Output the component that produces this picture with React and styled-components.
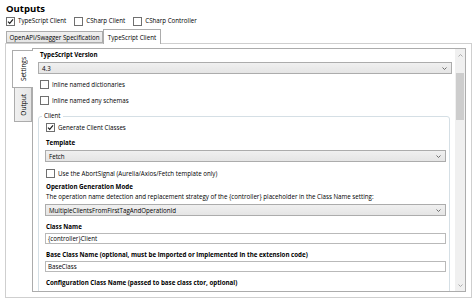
import React from "react";
import styled, { createGlobalStyle } from "styled-components";

const GlobalStyle = createGlobalStyle`
  html, body {
    margin: 0;
    padding: 0;
    background: #ffffff;
  }
  body {
    font-family: "Open Sans", "Noto Sans", sans-serif;
    color: #000000;
  }
`;

const FS = 6.2;

const Page = styled.div`
  width: 474px;
  height: 299px;
  box-sizing: border-box;
  padding: 3px 2px 1px 5px;
  display: flex;
  flex-direction: column;
  overflow: hidden;
`;

const Title = styled.div`
  font-size: 9.5px;
  font-weight: 700;
  line-height: 12px;
  height: 12px;
  margin-left: 1px;
`;

const CheckRow = styled.div`
  display: flex;
  align-items: center;
  gap: 8px;
  height: 10px;
  margin-top: 1px;
  margin-left: 1px;
`;

const CheckItem = styled.label`
  display: flex;
  align-items: center;
  gap: 3px;
  font-size: ${FS}px;
  line-height: 10px;
  height: ${(p) => p.$h || 10}px;
  white-space: nowrap;
`;

const Box = styled.span`
  width: 9px;
  height: 9px;
  box-sizing: border-box;
  border: 1px solid #707070;
  background: #ffffff;
  display: flex;
  align-items: center;
  justify-content: center;
  flex: none;
`;

const TabStrip = styled.div`
  display: flex;
  align-items: flex-end;
  height: 14px;
  margin-top: 3px;
  margin-left: 1px;
  position: relative;
  z-index: 1;
`;

const Tab = styled.div`
  box-sizing: border-box;
  height: ${(p) => (p.$active ? 15 : 12)}px;
  margin-bottom: ${(p) => (p.$active ? -1 : 0)}px;
  padding: 0 3px;
  display: flex;
  align-items: center;
  justify-content: center;
  font-size: ${FS}px;
  white-space: nowrap;
  border: 1px solid #acacac;
  border-bottom: ${(p) => (p.$active ? "none" : "1px solid #acacac")};
  border-left: ${(p) => (p.$first || p.$active ? "1px solid #acacac" : "none")};
  background: ${(p) =>
    p.$active ? "#ffffff" : "linear-gradient(#f0f0f0, #e5e5e5)"};
  width: ${(p) => p.$w}px;
`;

const Panel = styled.div`
  flex: 1;
  min-height: 0;
  box-sizing: border-box;
  border: 1px solid #cfcfcf;
  padding: 4px 5px 5px 6px;
  display: flex;
`;

const SideTabs = styled.div`
  width: 20px;
  display: flex;
  flex-direction: column;
  align-items: flex-end;
  padding-top: 2px;
  position: relative;
  z-index: 1;
`;

const SideTab = styled.div`
  box-sizing: border-box;
  width: ${(p) => (p.$active ? 21 : 18)}px;
  height: ${(p) => p.$h}px;
  margin-right: ${(p) => (p.$active ? -1 : 0)}px;
  border: 1px solid #acacac;
  border-right: ${(p) => (p.$active ? "none" : "1px solid #acacac")};
  border-top: ${(p) => (p.$active ? "1px solid #acacac" : "none")};
  background: ${(p) =>
    p.$active ? "#ffffff" : "linear-gradient(90deg, #f0f0f0, #e5e5e5)"};
  display: flex;
  align-items: center;
  justify-content: center;
`;

const SideLabel = styled.span`
  writing-mode: vertical-rl;
  transform: rotate(180deg);
  font-size: ${FS + 0.3}px;
  white-space: nowrap;
`;

const Inner = styled.div`
  flex: 1;
  min-width: 0;
  box-sizing: border-box;
  border: 1px solid #acacac;
  display: flex;
  overflow: hidden;
`;

const Content = styled.div`
  flex: 1;
  min-width: 0;
  padding: 1px 3px 0 5px;
  display: flex;
  flex-direction: column;
  overflow: hidden;
`;

const Label = styled.div`
  font-size: ${FS}px;
  font-weight: ${(p) => (p.$bold ? 700 : 400)};
  line-height: 10px;
  height: 10px;
  white-space: nowrap;
  margin-left: ${(p) => p.$indent ?? 1}px;
  margin-top: ${(p) => p.$mt || 0}px;
`;

const Select = styled.div`
  box-sizing: border-box;
  height: 12px;
  margin-top: ${(p) => p.$mt || 2}px;
  border: 1px solid #acacac;
  background: linear-gradient(#f0f0f0, #e5e5e5);
  display: flex;
  align-items: center;
  justify-content: space-between;
  padding: 0 4px 0 3px;
  font-size: ${FS}px;
  white-space: nowrap;
  flex: none;
`;

const Input = styled.div`
  box-sizing: border-box;
  height: 11px;
  margin-top: 1px;
  border: 1px solid #b9b9b9;
  background: #ffffff;
  display: flex;
  align-items: center;
  padding: 0 2px;
  font-size: ${FS}px;
  white-space: nowrap;
  flex: none;
`;

const Row = styled.div`
  margin-top: ${(p) => p.$mt || 0}px;
  margin-left: ${(p) => p.$indent ?? 2}px;
  flex: none;
`;

const Group = styled.fieldset`
  margin: 10px 2px 0 0;
  padding: 5px 3px 14px 6px;
  border: 1px solid #d5dfe5;
  border-radius: 3px;
  display: flex;
  flex-direction: column;
  flex: none;
  min-width: 0;
  position: relative;
`;

const Legend = styled.div`
  position: absolute;
  top: -6px;
  left: 3px;
  padding: 0 2px;
  background: #ffffff;
  font-size: ${FS}px;
  line-height: 10px;
`;

const ScrollBar = styled.div`
  width: 10px;
  background: #f0f0f0;
  display: flex;
  flex-direction: column;
  align-items: center;
  flex: none;
`;

const ScrollArrow = styled.div`
  height: 12px;
  display: flex;
  align-items: center;
  justify-content: center;
  flex: none;
`;

const Thumb = styled.div`
  width: 8px;
  height: 47px;
  margin-top: 12px;
  background: #cdcdcd;
  flex: none;
`;

const Spacer = styled.div`
  flex: 1;
`;

const Check = () => (
  <svg width="7" height="7" viewBox="0 0 7 7">
    <path d="M1 3.6 L2.7 5.3 L6 1.4" fill="none" stroke="#1e1e1e" strokeWidth="1.2" />
  </svg>
);

const Chevron = ({ up, color = "#606060" }) => (
  <svg width="5" height="3" viewBox="0 0 5 3">
    <path
      d={up ? "M0.5 2.5 L2.5 0.5 L4.5 2.5" : "M0.5 0.5 L2.5 2.5 L4.5 0.5"}
      fill="none"
      stroke={color}
      strokeWidth="0.9"
    />
  </svg>
);

const CheckBox = ({ checked, children, h }) => (
  <CheckItem $h={h}>
    <Box>{checked && <Check />}</Box>
    {children}
  </CheckItem>
);

const Dropdown = ({ value, mt }) => (
  <Select $mt={mt}>
    <span>{value}</span>
    <Chevron />
  </Select>
);

export default function App() {
  return (
    <>
      <GlobalStyle />
      <Page>
        <Title>Outputs</Title>
        <CheckRow>
          <CheckBox checked>TypeScript Client</CheckBox>
          <CheckBox>CSharp Client</CheckBox>
          <CheckBox>CSharp Controller</CheckBox>
        </CheckRow>
        <TabStrip>
          <Tab $first $w={97}>OpenAPI/Swagger Specification</Tab>
          <Tab $active $w={58}>TypeScript Client</Tab>
        </TabStrip>
        <Panel>
          <SideTabs>
            <SideTab $active $h={38}>
              <SideLabel>Settings</SideLabel>
            </SideTab>
            <SideTab $h={34}>
              <SideLabel>Output</SideLabel>
            </SideTab>
          </SideTabs>
          <Inner>
            <Content>
              <Label $bold $indent={2}>TypeScript Version</Label>
              <Dropdown value="4.3" />
              <Row $mt={5}>
                <CheckBox h={11}>Inline named dictionaries</CheckBox>
              </Row>
              <Row $mt={5}>
                <CheckBox h={11}>Inline named any schemas</CheckBox>
              </Row>
              <Group>
                <Legend>Client</Legend>
                <Row $indent={1}>
                  <CheckBox checked h={11}>Generate Client Classes</CheckBox>
                </Row>
                <Label $bold $mt={5}>Template</Label>
                <Dropdown value="Fetch" />
                <Row $mt={6} $indent={1}>
                  <CheckBox h={11}>
                    Use the AbortSignal (Aurelia/Axios/Fetch template only)
                  </CheckBox>
                </Row>
                <Label $bold $mt={3}>Operation Generation Mode</Label>
                <Label>
                  The operation name detection and replacement strategy of the
                  {" {controller} "}placeholder in the Class Name setting:
                </Label>
                <Dropdown value="MultipleClientsFromFirstTagAndOperationId" />
                <Label $bold $mt={6}>Class Name</Label>
                <Input>{"{controller}Client"}</Input>
                <Label $bold $mt={6}>
                  Base Class Name (optional, must be imported or implemented in
                  the extension code)
                </Label>
                <Input>BaseClass</Input>
                <Label $bold $mt={6}>
                  Configuration Class Name (passed to base class ctor, optional)
                </Label>
              </Group>
            </Content>
            <ScrollBar>
              <ScrollArrow>
                <Chevron up color="#a3a3a3" />
              </ScrollArrow>
              <Thumb />
              <Spacer />
              <ScrollArrow>
                <Chevron color="#a3a3a3" />
              </ScrollArrow>
            </ScrollBar>
          </Inner>
        </Panel>
      </Page>
    </>
  );
}
